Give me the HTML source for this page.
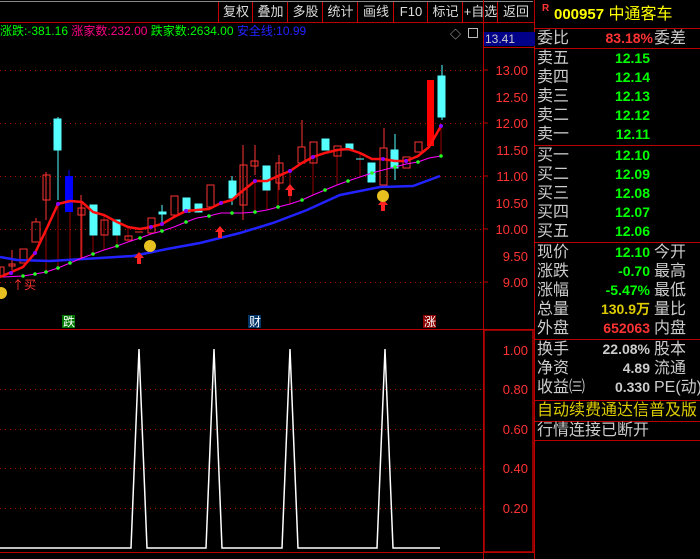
<!DOCTYPE html>
<html><head><meta charset="utf-8"><style>
body{margin:0;background:#000;width:700px;height:559px;overflow:hidden;position:relative;font-family:"Liberation Sans","Noto Sans CJK SC",sans-serif}
.a{position:absolute;white-space:nowrap}
.tb{position:absolute;top:2px;height:20px;color:#ddd;font-size:13px;line-height:20px;text-align:center;border-left:1px solid #c00}
.r{position:absolute;left:537px;font-size:16px;color:#ccc;line-height:19px}
.n{position:absolute;font-size:14px;font-weight:bold;line-height:19px;text-align:right}
.hl{position:absolute;left:535px;width:165px;height:1px;background:#b00}
</style></head><body>
<div class="a" style="left:0;top:1px;width:533px;height:1px;background:#888"></div>
<div class="tb" style="left:218px;width:34px">复权</div>
<div class="tb" style="left:252px;width:35px">叠加</div>
<div class="tb" style="left:287px;width:35px">多股</div>
<div class="tb" style="left:322px;width:35px">统计</div>
<div class="tb" style="left:357px;width:36px">画线</div>
<div class="tb" style="left:393px;width:34px">F10</div>
<div class="tb" style="left:427px;width:35px">标记</div>
<div class="tb" style="left:462px;width:35px">+自选</div>
<div class="tb" style="left:497px;width:36px;border-right:1px solid #c00">返回</div>
<div class="a" style="left:0;top:22px;width:535px;height:1px;background:#b00"></div>
<div class="a" style="left:0;top:24px;font-size:12px;line-height:14px"><span style="color:#0f0">涨跌:-381.16</span> <span style="color:#f08">涨家数:232.00</span> <span style="color:#0f0">跌家数:2634.00</span> <span style="color:#22f">安全线:10.99</span></div>
<div class="a" style="left:450px;top:26px;color:#bbb;font-size:11px">◇</div>
<div class="a" style="left:468px;top:28px;width:8px;height:8px;border:1px solid #bbb"></div>
<div class="a" style="left:483px;top:0;width:1px;height:559px;background:#b00"></div>
<div class="a" style="left:534px;top:0;width:1px;height:559px;background:#b00"></div>
<div class="a" style="left:484px;top:32px;width:50px;height:14px;background:#008;color:#ccc;font-size:12px;line-height:14px;padding-left:1px">13.41</div>
<div class="a" style="left:483px;top:47px;width:52px;height:1px;background:#b00"></div>
<svg class="a" style="left:0;top:0" width="700" height="559">
<g stroke="#b00" stroke-dasharray="1,4" stroke-width="1">
<line x1="0" y1="70.5" x2="483" y2="70.5"/><line x1="0" y1="123.5" x2="483" y2="123.5"/><line x1="0" y1="176.5" x2="483" y2="176.5"/><line x1="0" y1="229.5" x2="483" y2="229.5"/><line x1="0" y1="282.5" x2="483" y2="282.5"/>
<line x1="0" y1="389.5" x2="483" y2="389.5"/><line x1="0" y1="429.5" x2="483" y2="429.5"/><line x1="0" y1="468.5" x2="483" y2="468.5"/><line x1="0" y1="508.5" x2="483" y2="508.5"/>
</g>
<g fill="#f33" font-size="13" font-family="Liberation Sans" text-anchor="end">
<text x="528" y="75">13.00</text><text x="528" y="102">12.50</text><text x="528" y="128">12.00</text><text x="528" y="155">11.50</text><text x="528" y="181">11.00</text><text x="528" y="208">10.50</text><text x="528" y="234">10.00</text><text x="528" y="261">9.50</text><text x="528" y="287">9.00</text>
<text x="528" y="355">1.00</text><text x="528" y="394">0.80</text><text x="528" y="434">0.60</text><text x="528" y="473">0.40</text><text x="528" y="513">0.20</text>
</g>
<g stroke="#b00"><line x1="483" y1="70" x2="488" y2="70"/><line x1="483" y1="123" x2="488" y2="123"/><line x1="483" y1="176" x2="488" y2="176"/><line x1="483" y1="229" x2="488" y2="229"/><line x1="483" y1="282" x2="488" y2="282"/></g>
<line x1="0" y1="329.5" x2="535" y2="329.5" stroke="#b00"/>
<line x1="0" y1="552.5" x2="535" y2="552.5" stroke="#b00"/>
<rect x="484" y="330" width="49" height="222" fill="none" stroke="#b00" stroke-width="1.5"/>
<!-- wicks from MA -->
<g stroke="#900" stroke-width="1">
<line x1="46" y1="230" x2="46" y2="272"/><line x1="58" y1="204" x2="58" y2="268"/><line x1="70" y1="201" x2="70" y2="263"/><line x1="82" y1="202" x2="82" y2="258"/><line x1="93" y1="212" x2="93" y2="254"/><line x1="104" y1="215" x2="104" y2="250"/><line x1="117" y1="222" x2="117" y2="246"/><line x1="128" y1="227" x2="128" y2="242"/>
<line x1="255" y1="181" x2="255" y2="212"/><line x1="267" y1="181" x2="267" y2="210"/><line x1="278" y1="176" x2="278" y2="207"/><line x1="290" y1="171" x2="290" y2="204"/><line x1="313" y1="157" x2="313" y2="195"/><line x1="337" y1="150" x2="337" y2="185"/><line x1="360" y1="153" x2="360" y2="177"/><line x1="441" y1="126" x2="441" y2="156"/>
</g>
<!-- candles -->
<g stroke="#f33" fill="none" stroke-width="1">
<rect x="0" y="267" width="4" height="10"/><line x1="12" y1="250" x2="12" y2="270"/><rect x="9" y="264" width="6" height="2"/>
<rect x="20" y="249" width="7" height="14"/><rect x="32" y="222" width="8" height="20"/><line x1="36" y1="218" x2="36" y2="222"/>
<rect x="43" y="175" width="7" height="25"/><line x1="46" y1="172" x2="46" y2="220"/>
<rect x="78" y="208" width="7" height="7"/><line x1="81" y1="195" x2="81" y2="260"/>
<rect x="101" y="220" width="7" height="15"/><rect x="125" y="236" width="7" height="4"/><line x1="135" y1="232" x2="143" y2="232"/>
<rect x="148" y="218" width="7" height="15"/><rect x="171" y="196" width="7" height="19"/><rect x="207" y="185" width="7" height="22"/>
<rect x="240" y="165" width="7" height="40"/><line x1="243" y1="145" x2="243" y2="220"/><rect x="251" y="161" width="7" height="5"/><line x1="255" y1="145" x2="255" y2="175"/>
<rect x="276" y="163" width="7" height="20"/><line x1="279" y1="155" x2="279" y2="190"/><rect x="298" y="147" width="7" height="16"/><line x1="302" y1="120" x2="302" y2="147"/>
<rect x="310" y="142" width="7" height="21"/><rect x="334" y="146" width="7" height="10"/><rect x="380" y="148" width="7" height="37"/><line x1="384" y1="128" x2="384" y2="148"/>
<rect x="403" y="157" width="7" height="11"/><rect x="415" y="142" width="7" height="10"/>
</g>
<rect x="427" y="80" width="7" height="66" fill="#f00"/>
<g fill="#5ff" stroke="#5ff">
<rect x="54" y="119" width="7" height="31"/><line x1="58" y1="117" x2="58" y2="200"/>
<rect x="90" y="205" width="7" height="30"/><rect x="113" y="220" width="7" height="15"/><rect x="159" y="212" width="7" height="2"/><line x1="162" y1="205" x2="162" y2="223"/>
<rect x="183" y="198" width="7" height="14"/><rect x="195" y="204" width="7" height="8"/><rect x="229" y="181" width="7" height="17"/><line x1="232" y1="176" x2="232" y2="205"/>
<rect x="263" y="166" width="7" height="24"/><rect x="322" y="139" width="7" height="11"/><rect x="346" y="144" width="7" height="6"/><line x1="356" y1="159" x2="364" y2="159"/>
<rect x="368" y="163" width="7" height="19"/><rect x="391" y="150" width="7" height="18"/><line x1="395" y1="134" x2="395" y2="180"/>
<rect x="438" y="76" width="7" height="41"/><line x1="442" y1="65" x2="442" y2="120"/>
</g>
<rect x="65" y="176" width="8" height="36" fill="#00f"/><line x1="69" y1="170" x2="69" y2="212" stroke="#00f"/>
<polyline fill="none" stroke="#22f" stroke-width="2.5" points="0,257 17,260 50,261 100,258 133,256 167,249 200,243 220,238 240,233 273,223 307,210 340,195 380,187 413,186 440,176"/>
<polyline fill="none" stroke="#f0f" stroke-width="1" points="3,277 23,276 35,274 46,272 58,268 70,263 82,258 93,254 104,250 117,246 128,242 140,238 151,234 162,231 174,227 186,222 197,218 209,216 221,213 232,213 243,213 255,212 267,210 278,207 290,204 302,200 313,195 325,190 337,185 348,181 360,177 372,173 383,170 395,167 406,164 418,162 429,158 441,156"/>
<g fill="#2f2"><circle cx="23" cy="276" r="1.8"/><circle cx="35" cy="274" r="1.8"/><circle cx="46" cy="272" r="1.8"/><circle cx="58" cy="268" r="1.8"/><circle cx="70" cy="263" r="1.8"/><circle cx="93" cy="254" r="1.8"/><circle cx="117" cy="246" r="1.8"/><circle cx="140" cy="238" r="1.8"/><circle cx="162" cy="231" r="1.8"/><circle cx="186" cy="222" r="1.8"/><circle cx="209" cy="216" r="1.8"/><circle cx="232" cy="213" r="1.8"/><circle cx="255" cy="212" r="1.8"/><circle cx="278" cy="207" r="1.8"/><circle cx="302" cy="200" r="1.8"/><circle cx="325" cy="190" r="1.8"/><circle cx="348" cy="181" r="1.8"/><circle cx="372" cy="173" r="1.8"/><circle cx="395" cy="167" r="1.8"/><circle cx="418" cy="162" r="1.8"/><circle cx="441" cy="156" r="1.8"/></g>
<polyline fill="none" stroke="#f11" stroke-width="2.5" points="0,277 23,267 35,253 46,230 58,204 70,201 82,202 93,212 104,215 117,222 128,227 140,229 151,227 162,224 174,217 186,211 197,210 209,209 221,203 232,200 240,193 255,181 267,181 278,176 290,171 302,163 313,157 325,153 337,150 348,149 360,153 372,159 383,159 395,161 406,161 418,156 429,147 441,126"/>
<g fill="#80f"><circle cx="11" cy="273" r="2"/><circle cx="35" cy="253" r="2"/><circle cx="58" cy="204" r="2"/><circle cx="151" cy="227" r="2"/><circle cx="162" cy="224" r="2"/><circle cx="186" cy="211" r="2"/><circle cx="221" cy="203" r="2"/><circle cx="255" cy="181" r="2"/><circle cx="290" cy="171" r="2"/><circle cx="313" cy="157" r="2"/><circle cx="383" cy="159" r="2"/><circle cx="406" cy="161" r="2"/><circle cx="441" cy="126" r="2"/></g>
<g fill="#f22"><path d="M139 252 l-5 6 h3 v6 h4 v-6 h3z"/><path d="M220 226 l-5 6 h3 v6 h4 v-6 h3z"/><path d="M290 184 l-5 6 h3 v6 h4 v-6 h3z"/><path d="M383 199 l-5 6 h3 v6 h4 v-6 h3z"/></g>
<g fill="#e8c020"><circle cx="150" cy="246" r="6"/><circle cx="383" cy="196" r="6"/><circle cx="1" cy="293" r="6"/></g>
<text x="12" y="289" fill="#f33" font-size="12" font-family="Noto Sans CJK SC">↑买</text>
<rect x="62" y="315" width="13" height="13" fill="#070"/><text x="63" y="326" fill="#fff" font-size="12" font-family="Noto Sans CJK SC">跌</text>
<rect x="248" y="315" width="13" height="13" fill="#036"/><text x="249" y="326" fill="#fff" font-size="12" font-family="Noto Sans CJK SC">财</text>
<rect x="423" y="315" width="13" height="13" fill="#800"/><text x="424" y="326" fill="#fff" font-size="12" font-family="Noto Sans CJK SC">涨</text>
<polyline fill="none" stroke="#fff" stroke-width="1.5" points="0,548 131,548 139,349 147,548 206,548 214,349 222,548 282,548 290,349 298,548 377,548 385,349 393,548 440,548"/>
</svg>
<div class="a" style="left:542px;top:3px;color:#f33;font-size:10px;font-weight:bold">R</div>
<div class="a" style="left:554px;top:5px;color:#ff0;font-size:16px;line-height:20px"><b style="font-size:15px">000957</b> 中通客车</div>
<div class="hl" style="top:28px"></div>
<div class="r" style="top:29px">委比</div><div class="n" style="left:590px;top:29px;width:63px;color:#f33">83.18%</div><div class="r" style="left:654px;top:29px">委差</div>
<div class="hl" style="top:48px"></div>
<div class="r" style="top:49px">卖五<br>卖四<br>卖三<br>卖二<br>卖一</div>
<div class="n" style="left:590px;top:49px;width:60px;color:#0f0">12.15<br>12.14<br>12.13<br>12.12<br>12.11</div>
<div class="hl" style="top:145px"></div>
<div class="r" style="top:146px">买一<br>买二<br>买三<br>买四<br>买五</div>
<div class="n" style="left:590px;top:146px;width:60px;color:#0f0">12.10<br>12.09<br>12.08<br>12.07<br>12.06</div>
<div class="hl" style="top:242px"></div>
<div class="r" style="top:243px">现价<br>涨跌<br>涨幅<br>总量<br>外盘</div>
<div class="n" style="left:580px;top:243px;width:70px"><span style="color:#0f0">12.10<br>-0.70<br>-5.47%</span><br><span style="color:#dc0">130.9万</span><br><span style="color:#f33">652063</span></div>
<div class="r" style="left:654px;top:243px">今开<br>最高<br>最低<br>量比<br>内盘</div>
<div class="hl" style="top:339px"></div>
<div class="r" style="top:340px">换手<br>净资<br>收益㈢</div>
<div class="n" style="left:580px;top:340px;width:70px;color:#ccc">22.08%<br>4.89<br>0.330</div>
<div class="r" style="left:654px;top:340px">股本<br>流通<br>PE(动)</div>
<div class="hl" style="top:400px"></div>
<div class="r" style="top:401px;color:#dc0">自动续费通达信普及版</div>
<div class="hl" style="top:421px"></div>
<div class="r" style="top:421px">行情连接已断开</div>
<div class="hl" style="top:440px"></div>
</body></html>
